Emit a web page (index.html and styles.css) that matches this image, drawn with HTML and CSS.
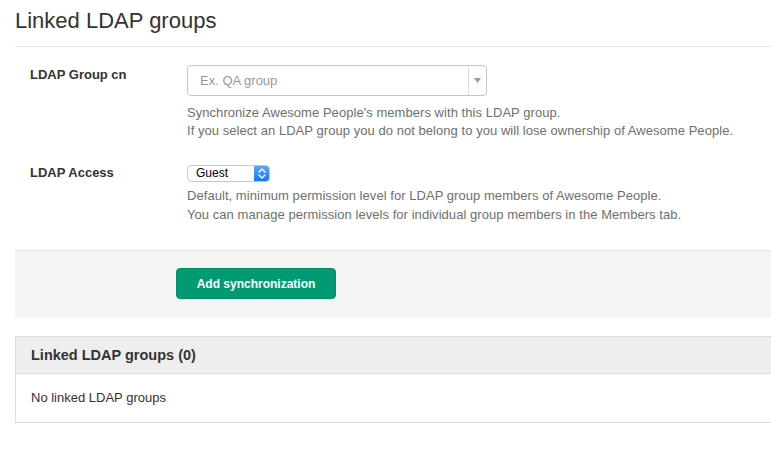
FILE: index.html
```html
<!DOCTYPE html>
<html>
<head>
<meta charset="utf-8">
<link rel="stylesheet" href="styles.css">
</head>
<body>
<div class="page">
  <h3 class="title">Linked LDAP groups</h3>
  <div class="form">
    <div class="row row-cn">
      <div class="label">LDAP Group cn</div>
      <div class="field">
        <div class="combo">
          <span class="placeholder">Ex. QA group</span>
          <span class="arrow"><svg width="7" height="5" viewBox="0 0 7 5"><path d="M0 0H7L3.5 5Z" fill="#999"/></svg></span>
        </div>
        <div class="help">
          <div>Synchronize Awesome People's members with this LDAP group.</div>
          <div>If you select an LDAP group you do not belong to you will lose ownership of Awesome People.</div>
        </div>
      </div>
    </div>
    <div class="row row-access">
      <div class="label">LDAP Access</div>
      <div class="field">
        <div class="native-select">
          <span class="ns-text">Guest</span>
          <span class="ns-btn"><svg width="8" height="11" viewBox="0 0 8 11"><path d="M1 4L4 1L7 4M1 7L4 10L7 7" fill="none" stroke="#fff" stroke-width="1.4" stroke-linecap="round" stroke-linejoin="round"/></svg></span>
        </div>
        <div class="help help2">
          <div>Default, minimum permission level for LDAP group members of Awesome People.</div>
          <div>You can manage permission levels for individual group members in the Members tab.</div>
        </div>
      </div>
    </div>
    <div class="actions">
      <button class="btn">Add synchronization</button>
    </div>
  </div>
  <div class="panel">
    <div class="panel-head">Linked LDAP groups (0)</div>
    <div class="panel-body">No linked LDAP groups</div>
  </div>
</div>
</body>
</html>
```
FILE: styles.css
```css
html, body {
  margin: 0;
  padding: 0;
  background: #fff;
}
body {
  font-family: "Liberation Sans", Arial, sans-serif;
  color: #333;
  font-size: 13px;
  overflow: hidden;
}
.page {
  margin-left: 15px;
}
.title {
  margin: 0;
  padding-top: 8px;
  font-size: 22px;
  font-weight: normal;
  line-height: 26px;
  height: 38px;
  border-bottom: 1px solid #e5e5e5;
  color: #333;
}
.form {
  padding-top: 18px;
}
.row {
  display: flex;
}
.label {
  width: 157px;
  padding-left: 15px;
  font-weight: bold;
  font-size: 13px;
  line-height: 18px;
}
.row-cn .label {
  padding-top: 1px;
}
.field {
  flex: 1;
}
.combo {
  width: 298px;
  height: 29px;
  border: 1px solid #c6c6c6;
  border-radius: 4px;
  display: flex;
  align-items: center;
  justify-content: space-between;
  box-sizing: content-box;
}
.placeholder {
  padding-left: 12px;
  color: #999;
  font-size: 13px;
}
.arrow {
  width: 17px;
  height: 29px;
  border-left: 1px solid #ddd;
  display: flex;
  align-items: center;
  justify-content: center;
}
.help {
  color: #6f6f6f;
  font-size: 13px;
  line-height: 18px;
  margin-top: 8px;
  letter-spacing: 0.05px;
}
.row-access {
  margin-top: 25px;
}
.row-access .label {
  padding-top: 0;
  margin-top: -1px;
}
.native-select {
  width: 81px;
  height: 15px;
  border: 1px solid #c9c9c9;
  border-radius: 4px;
  display: flex;
  overflow: hidden;
  background: #fff;
}
.ns-text {
  flex: 1;
  padding-left: 8px;
  font-size: 12px;
  line-height: 15px;
  color: #000;
}
.ns-btn {
  width: 15px;
  background: linear-gradient(#5aa8fb, #1776f5);
  display: flex;
  align-items: center;
  justify-content: center;
}
.help2 {
  margin-top: 4px;
  line-height: 19px;
}
.actions {
  margin-top: 26px;
  background: #f4f4f4;
  border-top: 1px solid #e5e5e5;
  padding: 17px 0 19px 161px;
}
.btn {
  display: block;
  width: 160px;
  height: 31px;
  background: #019a73;
  border: 1px solid #018f6a;
  border-radius: 4px;
  color: #fff;
  font-family: "Liberation Sans", Arial, sans-serif;
  font-weight: bold;
  font-size: 12px;
  padding: 0;
}
.panel {
  margin-top: 18px;
  border: 1px solid #ddd;
  border-right: none;
}
.panel-head {
  background: #eee;
  border-bottom: 1px solid #ddd;
  height: 36px;
  line-height: 36px;
  padding-left: 15px;
  font-size: 14.5px;
  font-weight: 600;
  color: #333;
}
.panel-body {
  height: 48px;
  line-height: 48px;
  padding-left: 15px;
  font-size: 13px;
  color: #333;
}
```
